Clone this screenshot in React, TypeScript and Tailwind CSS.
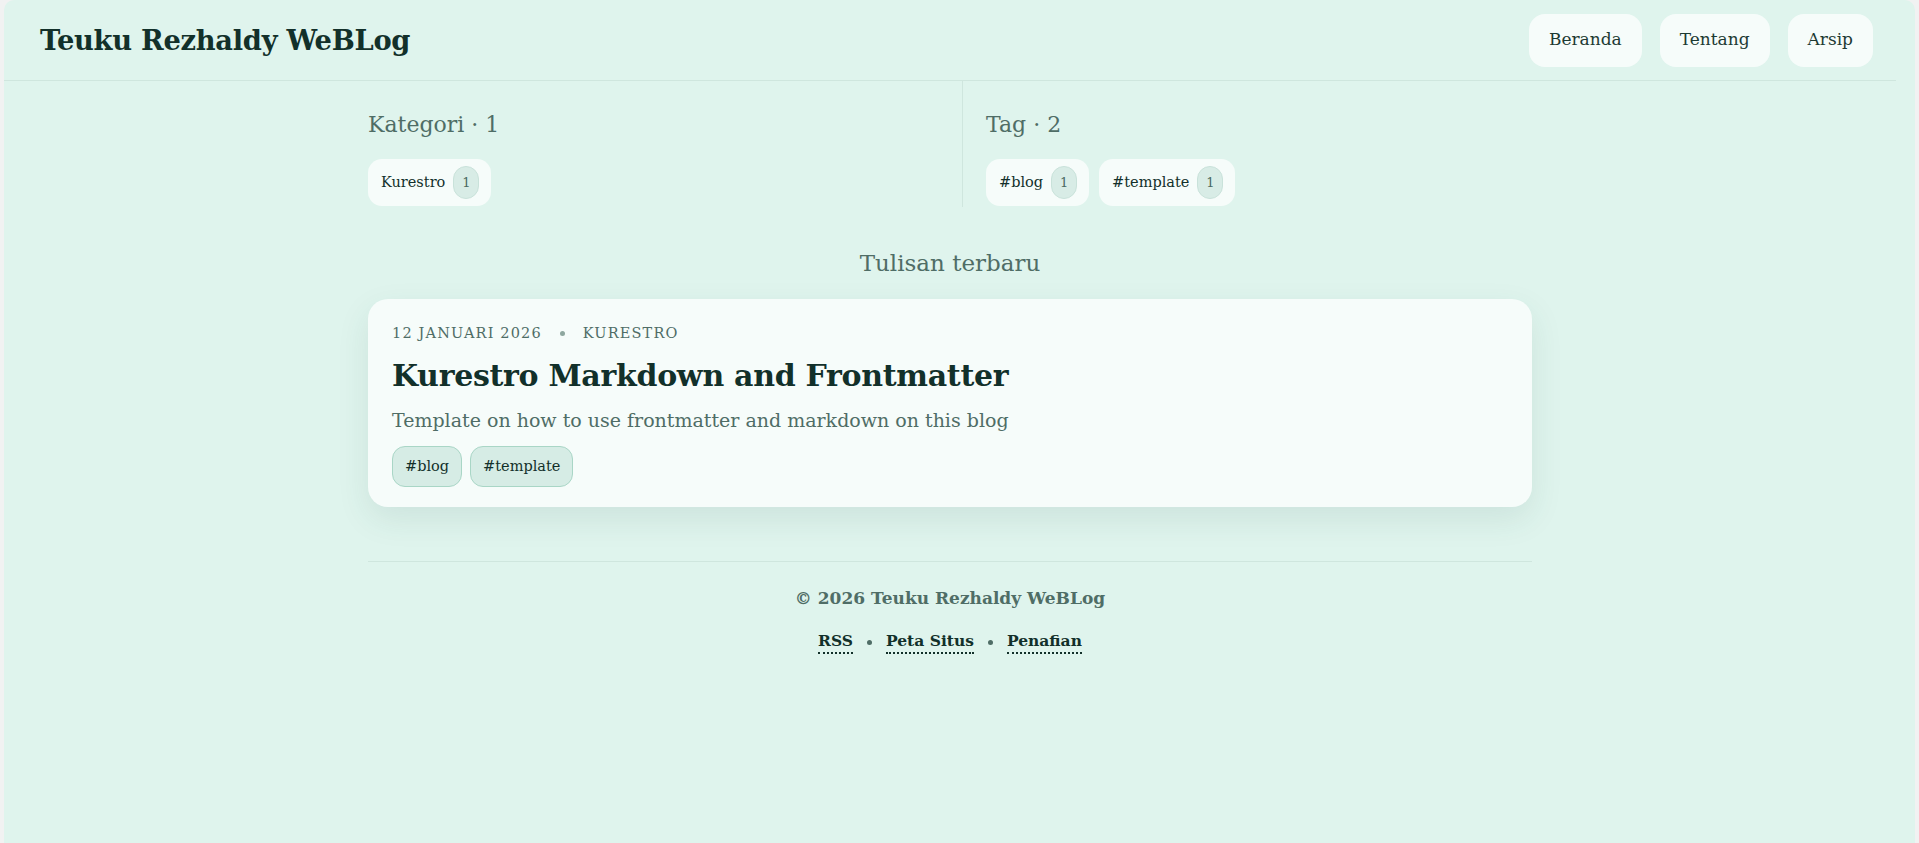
import React from 'react';

const serif = 'font-["DejaVu_Serif",serif]';

const navLinks = ['Beranda', 'Tentang', 'Arsip'];

const categories = [{ name: 'Kurestro', count: 1 }];
const tags = [
  { name: '#blog', count: 1 },
  { name: '#template', count: 1 },
];

function CountChip({ label, count }: { label: string; count: number }) {
  return (
    <span className="flex h-[47px] items-center gap-2 rounded-[14px] bg-[#f6fcfa] pl-[13px] pr-3 text-[14.5px] text-[#12302a]">
      {label}
      <span className="flex h-[33px] w-[26px] items-center justify-center rounded-full border border-[#c9e2da] bg-[#d8ece6] text-[13px] text-[#4b6a62]">
        {count}
      </span>
    </span>
  );
}

export default function App() {
  return (
    <div className={`min-h-screen bg-[#f1f2f2] px-1 ${serif}`}>
      <div className="min-h-[843px] rounded-t-[10px] bg-[#dff4ed] pr-[19px]">
        {/* Header */}
        <header className="flex h-[81px] items-center justify-between border-b border-[#cfe6de] pl-9 pr-[23px]">
          <h1 className="text-[27.3px] font-bold tracking-[-0.01em] text-[#12302a]">
            Teuku Rezhaldy WeBLog
          </h1>
          <nav className="flex items-center gap-[18px]">
            {navLinks.map((link) => (
              <a
                key={link}
                href="#"
                className="flex h-[53px] items-center rounded-2xl bg-[#f6fcfa] px-5 text-[17px] text-[#1d3a33]"
              >
                {link}
              </a>
            ))}
          </nav>
        </header>

        <main className="mx-auto w-[1164px]">
          {/* Taxonomy */}
          <section className="grid grid-cols-2 gap-6">
            <div className="pt-[29px] pb-px">
              <h2 className="text-[22px] leading-[30px] text-[#4f6d66]">Kategori · 1</h2>
              <div className="mt-[19px] flex flex-wrap gap-[10px]">
                {categories.map((c) => (
                  <CountChip key={c.name} label={c.name} count={c.count} />
                ))}
              </div>
            </div>
            <div className="border-l border-[#cfe6de] pl-[23px] pt-[29px] pb-px">
              <h2 className="text-[22px] leading-[30px] text-[#4f6d66]">Tag · 2</h2>
              <div className="mt-[19px] flex flex-wrap gap-[10px]">
                {tags.map((t) => (
                  <CountChip key={t.name} label={t.name} count={t.count} />
                ))}
              </div>
            </div>
          </section>

          {/* Latest posts */}
          <h2 className="mt-[41px] text-center text-[23px] leading-[30px] text-[#4f6d66]">
            Tulisan terbaru
          </h2>

          <article className="mt-[21px] rounded-[20px] bg-[#f6fcfa] px-6 pt-6 pb-5 shadow-[0_12px_32px_rgba(40,90,75,0.10)]">
            <div className="flex items-center gap-[18px] text-[14.5px] leading-5 tracking-[0.08em] text-[#4f6d66] uppercase">
              <span>12 Januari 2026</span>
              <span className="h-[5px] w-[5px] rounded-full bg-[#8ea79f]" />
              <span>Kurestro</span>
            </div>
            <h3 className="mt-[13px] text-[30px] leading-10 font-bold tracking-[-0.01em] text-[#12302a]">
              Kurestro Markdown and Frontmatter
            </h3>
            <p className="mt-[10px] text-[19px] leading-7 text-[#4f6d66]">
              Template on how to use frontmatter and markdown on this blog
            </p>
            <div className="mt-3 flex gap-2">
              {tags.map((t) => (
                <span
                  key={t.name}
                  className="flex h-[41px] items-center rounded-[13px] border border-[#a9d6c6] bg-[#d6ece5] px-3 text-[14.5px] text-[#12302a]"
                >
                  {t.name}
                </span>
              ))}
            </div>
          </article>

          {/* Footer */}
          <footer className="mt-[54px] border-t border-[#cfe6de] pt-6 text-center">
            <p className="text-[17px] leading-6 font-bold text-[#4f6d66]">
              © 2026 Teuku Rezhaldy WeBLog
            </p>
            <div className="mt-5 flex items-center justify-center gap-[14px] text-[15.5px] leading-6 font-bold text-[#12302a]">
              <a href="#" className="border-b-2 border-dotted border-[#12302a] leading-[22px]">RSS</a>
              <span className="h-[5px] w-[5px] rounded-full bg-[#4f6d66]" />
              <a href="#" className="border-b-2 border-dotted border-[#12302a] leading-[22px]">Peta Situs</a>
              <span className="h-[5px] w-[5px] rounded-full bg-[#4f6d66]" />
              <a href="#" className="border-b-2 border-dotted border-[#12302a] leading-[22px]">Penafian</a>
            </div>
          </footer>
        </main>
      </div>
    </div>
  );
}
